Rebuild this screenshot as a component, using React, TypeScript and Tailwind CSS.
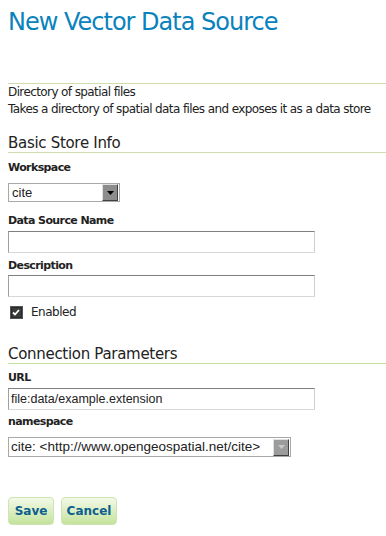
export default function App() {
  const labelCls =
    "block text-[11px] leading-[14px] font-bold tracking-[-0.6px] text-[#222] [font-family:'DejaVu_Sans',Verdana,sans-serif]";
  const inputCls =
    "h-[22px] w-[307px] border border-t-[#7f7f7f] border-l-[#a0a0a0] border-r-[#cfcfcf] border-b-[#d8d8d8] bg-white pl-[2px] text-[12.5px] leading-[20px] text-[#222] [font-family:'Liberation_Sans',Arial,sans-serif]";

  const Arrow = ({ disabled }: { disabled?: boolean }) => (
    <div
      className={`flex h-[17px] w-[16px] items-center justify-center border border-t-[#e0e0e0] border-l-[#e0e0e0] border-r-[#404040] border-b-[#404040] ${
        disabled ? "bg-[#9c9c9c]" : "bg-[#8c8c8c]"
      }`}
    >
      <svg width="7" height="4" viewBox="0 0 7 4">
        <path d="M0 0h7L3.5 4z" fill={disabled ? "#c8c8c8" : "#000"} />
      </svg>
    </div>
  );

  return (
    <div className="min-h-screen bg-white px-2 pt-[8px] text-[#222] [font-family:'DejaVu_Sans',Verdana,sans-serif]">
      <h1 className="text-[24px] leading-[28px] tracking-[-1px] text-[#0a82bd]">New Vector Data Source</h1>

      <div className="mt-[47px] -mr-2 border-t border-[#cfdcb0] text-[12px] leading-[17px] tracking-[-0.6px]">
        <p>Directory of spatial files</p>
        <p>Takes a directory of spatial data files and exposes it as a data store</p>
      </div>

      <h2 className="mt-[17px] -mr-2 border-b border-[#cfdcb0] text-[15px] leading-[17px] tracking-[-0.3px] text-[#222]">
        Basic Store Info
      </h2>

      <div className="mt-[8px] flex flex-col items-start">
        <label className={labelCls}>Workspace</label>
        <div className="mt-[8px] flex h-[19px] w-[112px] items-center border border-[#a8a8a8] bg-white pl-[3px] pr-[1px]">
          <span className="flex-1 text-[13px] leading-[17px] [font-family:'Liberation_Sans',Arial,sans-serif]">cite</span>
          <Arrow />
        </div>

        <label className={`${labelCls} mt-[12px]`}>Data Source Name</label>
        <div className={`${inputCls} mt-[3px]`} />

        <label className={`${labelCls} mt-[6px]`}>Description</label>
        <div className={`${inputCls} mt-[2px]`} />

        <div className="mt-[7px] flex h-[16px] items-center">
          <svg width="13" height="13" viewBox="0 0 13 13" className="ml-[2px]">
            <rect x="0.5" y="0.5" width="12" height="12" fill="#2a2a2a" stroke="#555" />
            <rect x="2" y="2" width="9" height="9" fill="#3a3a3a" />
            <path d="M3 6.5l2 2 4-4.5" stroke="#fff" strokeWidth="1.8" fill="none" />
          </svg>
          <span className="ml-[8px] text-[12px] leading-[16px] tracking-[-0.5px]">Enabled</span>
        </div>
      </div>

      <h2 className="mt-[26px] -mr-2 border-b border-[#bfe19a] text-[15px] leading-[17px] tracking-[-0.3px] text-[#222]">
        Connection Parameters
      </h2>

      <div className="mt-[7px] flex flex-col items-start">
        <label className={labelCls}>URL</label>
        <div className={`${inputCls} mt-[3px]`}>file:data/example.extension</div>

        <label className={`${labelCls} mt-[5px]`}>namespace</label>
        <div className="mt-[8px] flex h-[20px] w-[283px] items-center border border-[#a8a8a8] bg-white pl-[2px] pr-[1px]">
          <span className="flex-1 text-[13.5px] leading-[18px] [font-family:'Liberation_Sans',Arial,sans-serif]">
            cite: &lt;http://www.opengeospatial.net/cite&gt;
          </span>
          <Arrow disabled />
        </div>
      </div>

      <div className="mt-[40px] flex gap-[7px]">
        <button className="h-[28px] w-[46px] rounded-[4px] border border-[#cfe3b4] bg-gradient-to-b from-[#f3f9e8] to-[#c4e39c] text-[12px] font-bold text-[#0c5f8e]">
          Save
        </button>
        <button className="h-[28px] w-[56px] rounded-[4px] border border-[#cfe3b4] bg-gradient-to-b from-[#f3f9e8] to-[#c4e39c] text-[12px] font-bold text-[#0c5f8e]">
          Cancel
        </button>
      </div>
    </div>
  );
}
